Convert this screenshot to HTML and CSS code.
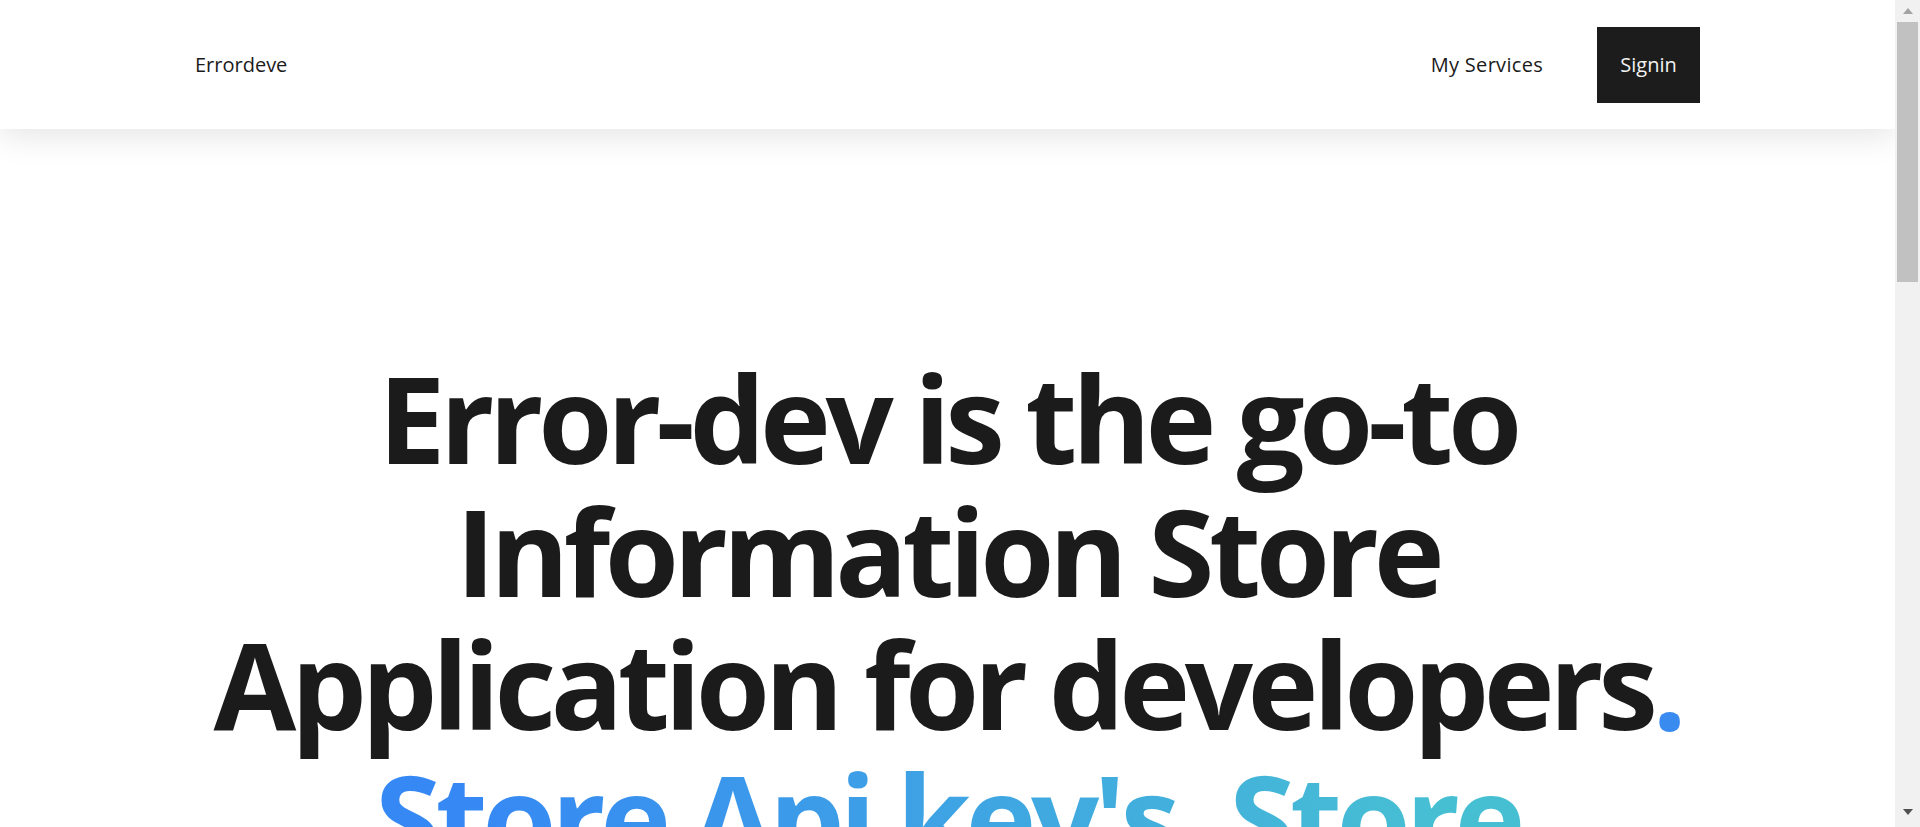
FILE: index.html
```html
<!DOCTYPE html>
<html lang="en">
<head>
<meta charset="utf-8">
<title>Errordeve</title>
<link rel="stylesheet" href="styles.css">
</head>
<body>
<header class="site-header">
  <div class="header-inner">
    <a class="brand" href="#">Errordeve</a>
    <nav class="nav">
      <a class="nav-link" href="#">My Services</a>
      <a class="btn-signin" href="#">Signin</a>
    </nav>
  </div>
</header>
<main class="page">
  <section class="hero">
    <h1 class="hero-title">Error-dev is the go-to Information Store Application for developers<span class="dot">.</span>
      <span class="grad">Store Api key's, Store Passwords, Store Notes, all in one place.</span>
    </h1>
    <p class="hero-sub">Keep every secret, credential and snippet you need safe, organised and just one click away.</p>
  </section>
  <section class="features">
    <div class="feature">
      <h2>Api Keys</h2>
      <p>Save the keys of every service you use and find them again in seconds.</p>
    </div>
    <div class="feature">
      <h2>Passwords</h2>
      <p>Store your passwords in one secure place instead of scattered notes.</p>
    </div>
    <div class="feature">
      <h2>Notes</h2>
      <p>Write down commands, snippets and fixes for the errors you meet.</p>
    </div>
  </section>
  <footer class="site-footer">© Errordeve</footer>
</main>
<div class="scrollbar" aria-hidden="true">
  <div class="sb-btn">
    <svg width="10" height="6" viewBox="0 0 10 6"><polygon points="5,0 10,6 0,6" fill="#a3a3a3"/></svg>
  </div>
  <div class="sb-track"><div class="sb-thumb"></div></div>
  <div class="sb-btn sb-btn-down">
    <svg width="10" height="6" viewBox="0 0 10 6"><polygon points="0,0 10,0 5,6" fill="#505050"/></svg>
  </div>
</div>
</body>
</html>
```
FILE: styles.css
```css
html, body {
  margin: 0;
  padding: 0;
}
body {
  margin-right: 25px;
  font-family: "Open Sans", "Noto Sans", sans-serif;
  color: #1b1b1b;
  background: #fff;
}
a {
  text-decoration: none;
  color: inherit;
}
.site-header {
  position: sticky;
  top: 0;
  z-index: 10;
  background: #fff;
  height: 129px;
  box-shadow: 0 8px 30px rgba(0, 0, 0, 0.1);
}
.header-inner {
  max-width: 1505px;
  margin: 0 auto;
  height: 100%;
  display: flex;
  align-items: center;
  justify-content: space-between;
}
.brand {
  font-size: 20px;
  color: #1b1b1b;
}
.nav {
  display: flex;
  align-items: center;
  gap: 54px;
}
.nav-link {
  font-size: 20px;
  letter-spacing: 0.3px;
}
.btn-signin {
  background: #1c1c1c;
  color: #f2f2f2;
  font-size: 20px;
  width: 103px;
  height: 76px;
  display: flex;
  align-items: center;
  justify-content: center;
}
.page {
  min-height: 3905px;
  display: flex;
  flex-direction: column;
}
.hero {
  padding: 222px 0 300px;
  display: flex;
  flex-direction: column;
  align-items: center;
}
.hero-title {
  margin: 0;
  max-width: 1620px;
  text-align: center;
  font-size: 120px;
  line-height: 133px;
  font-weight: 700;
  letter-spacing: -5.4px;
}
.dot {
  color: #3a8bf0;
}
.grad {
  display: block;
  background: linear-gradient(90deg, #3688f4 20%, #47bfd3 80%);
  -webkit-background-clip: text;
  background-clip: text;
  color: transparent;
}
.hero-sub {
  margin: 80px 0 0;
  max-width: 900px;
  text-align: center;
  font-size: 28px;
  line-height: 1.5;
  color: #555;
}
.features {
  width: 1505px;
  margin: 0 auto;
  padding: 200px 0;
  display: grid;
  grid-template-columns: repeat(3, 1fr);
  gap: 60px;
  flex: 1;
  align-content: start;
}
.feature h2 {
  font-size: 40px;
  margin: 0 0 20px;
}
.feature p {
  font-size: 22px;
  line-height: 1.6;
  color: #555;
  margin: 0;
}
.site-footer {
  padding: 60px 0;
  text-align: center;
  font-size: 16px;
  color: #777;
}
.scrollbar {
  position: fixed;
  top: 0;
  right: 0;
  width: 25px;
  height: 100vh;
  background: #f1f1f1;
  display: flex;
  flex-direction: column;
  z-index: 20;
}
.sb-btn {
  height: 22px;
  display: flex;
  align-items: center;
  justify-content: center;
}
.sb-btn-down {
  height: 30px;
}
.sb-track {
  flex: 1;
  padding: 0 2px;
}
.sb-thumb {
  height: 260px;
  background: #c1c1c1;
}
```
